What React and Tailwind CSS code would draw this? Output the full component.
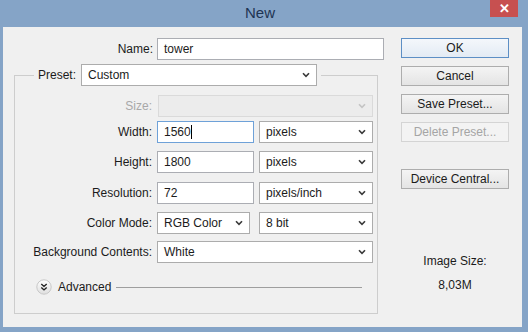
import React from "react";

const Chevron = ({ disabled }) => (
  <svg width="8" height="6" viewBox="0 0 8 6" className="shrink-0">
    <path
      d="M1 1.2 L4 4.3 L7 1.2"
      fill="none"
      stroke={disabled ? "#c4c4c4" : "#3a3a3a"}
      strokeWidth="1.6"
    />
  </svg>
);

const Select = ({ value, w, disabled }) => (
  <div
    className={`${w} h-[22px] shrink-0 flex items-center justify-between pl-[6px] pr-[6px] border ${
      disabled ? "bg-[#ececec] border-[#dadada]" : "bg-white border-[#acacac]"
    }`}
  >
    <span className="leading-none">{value}</span>
    <Chevron disabled={disabled} />
  </div>
);

const Input = ({ value, w, focused }) => (
  <div
    className={`${w} h-[22px] shrink-0 flex items-center pl-[6px] bg-white border ${
      focused ? "border-[#6ea1d8]" : "border-[#abadb3]"
    }`}
  >
    <span className="leading-none">{value}</span>
    {focused && <span className="w-px h-[14px] bg-black" />}
  </div>
);

const Row = ({ label, mt, children, muted }) => (
  <div className={`flex items-center ${mt}`}>
    <div className={`w-[137px] shrink-0 text-right ${muted ? "text-[#a8a8a8]" : ""}`}>{label}</div>
    <div className="ml-[5px] flex gap-[5px]">{children}</div>
  </div>
);

const Button = ({ children, mt, primary, disabled }) => (
  <div
    className={`w-[108px] h-[20px] flex items-center justify-center border ${mt} ${
      primary
        ? "border-[#5d8fc5] bg-gradient-to-b from-[#f4f7fb] to-[#e3ebf4]"
        : disabled
        ? "border-[#d4d4d4] bg-[#f3f3f3] text-[#a5a5a5]"
        : "border-[#adadad] bg-gradient-to-b from-[#f4f4f4] to-[#e4e4e4]"
    }`}
  >
    {children}
  </div>
);

export default function App() {
  return (
    <div className="w-[528px] h-[332px] bg-[#85a4c7] flex flex-col font-['Liberation_Sans',Arial,sans-serif] text-[12px] text-[#1b1b1b]">
      <div className="h-[27px] flex items-start">
        <div className="w-[30px]" />
        <div className="flex-1 h-[26px] flex items-center justify-center text-[15px] text-[#1e3553]">
          New
        </div>
        <div className="w-[28px] h-[17px] mr-[10px] bg-[#c75050] flex items-center justify-center text-white text-[13px] font-bold leading-none">
          ✕
        </div>
      </div>

      <div className="ml-[3px] mr-[6px] h-[300px] bg-[#f0f0f0] flex">
        <div className="w-[375px] shrink-0 flex flex-col">
          <div className="mt-[11px] flex items-center">
            <div className="w-[150px] shrink-0 text-right">Name:</div>
            <div className="ml-[4px] shrink-0">
              <Input value="tower" w="w-[227px]" />
            </div>
          </div>

          <fieldset className="ml-[11px] mt-[4px] w-[364px] h-[250px] border border-[#cdcdcd] p-0 m-0">
            <legend className="ml-[19px] px-[4px]">
              <div className="flex items-center gap-[5px]">
                <span>Preset:</span>
                <Select value="Custom" w="w-[236px]" />
              </div>
            </legend>

            <Row label="Size:" mt="mt-[9px]" muted>
              <div className="ml-[1px]">
                <Select value="" w="w-[215px]" disabled />
              </div>
            </Row>
            <Row label="Width:" mt="mt-[4px]">
              <Input value="1560" w="w-[97px]" focused />
              <Select value="pixels" w="w-[114px]" />
            </Row>
            <Row label="Height:" mt="mt-[8px]">
              <Input value="1800" w="w-[97px]" />
              <Select value="pixels" w="w-[114px]" />
            </Row>
            <Row label="Resolution:" mt="mt-[9px]">
              <Input value="72" w="w-[97px]" />
              <Select value="pixels/inch" w="w-[114px]" />
            </Row>
            <Row label="Color Mode:" mt="mt-[8px]">
              <div className="flex gap-[9px]">
                <Select value="RGB Color" w="w-[93px]" />
                <Select value="8 bit" w="w-[114px]" />
              </div>
            </Row>
            <Row label="Background Contents:" mt="mt-[7px]">
              <Select value="White" w="w-[216px]" />
            </Row>

            <div className="mt-[15px] ml-[21px] mr-[15px] flex items-center">
              <svg width="16" height="16" viewBox="0 0 16 16" className="shrink-0">
                <defs>
                  <linearGradient id="adv" x1="0" y1="0" x2="0" y2="1">
                    <stop offset="0" stopColor="#ffffff" />
                    <stop offset="1" stopColor="#dedede" />
                  </linearGradient>
                </defs>
                <circle cx="8" cy="8" r="7.2" fill="url(#adv)" stroke="#c8c8c8" />
                <path d="M5.3 4.9 L8 7.4 L10.7 4.9 M5.3 8.4 L8 10.9 L10.7 8.4" fill="none" stroke="#222" strokeWidth="1.4" />
              </svg>
              <span className="ml-[6px]">Advanced</span>
              <div className="flex-1 ml-[5px] h-px bg-[#9e9e9e]" />
            </div>
          </fieldset>
        </div>

        <div className="ml-[23px] w-[108px] flex flex-col items-center">
          <Button mt="mt-[11px]" primary>OK</Button>
          <Button mt="mt-[8px]">Cancel</Button>
          <Button mt="mt-[8px]">Save Preset...</Button>
          <Button mt="mt-[8px]" disabled>Delete Preset...</Button>
          <Button mt="mt-[27px]">Device Central...</Button>
          <div className="mt-[65px] leading-[15px]">Image Size:</div>
          <div className="mt-[9px] leading-[15px]">8,03M</div>
        </div>
      </div>
    </div>
  );
}
